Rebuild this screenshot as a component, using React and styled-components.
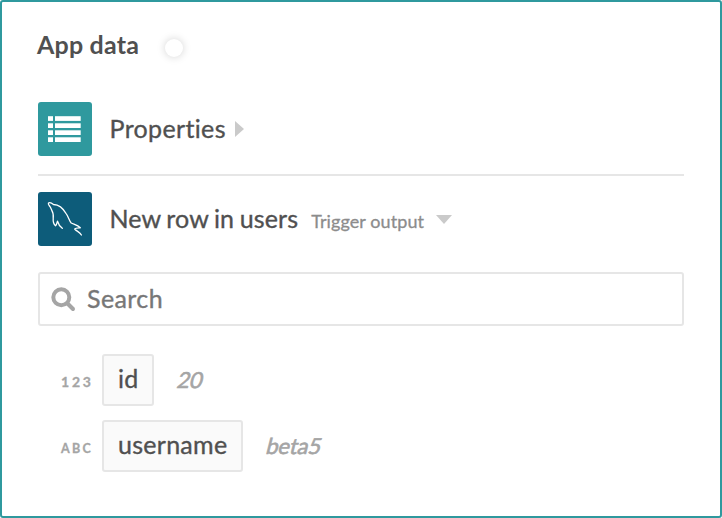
import React from "react";
import styled, { createGlobalStyle } from "styled-components";

const GlobalStyle = createGlobalStyle`
  * { box-sizing: border-box; }
  body { margin: 0; background: #fff; font-family: Lato, sans-serif; color: #505050; font-variant-ligatures: none; }
`;

const Panel = styled.main`
  display: flex;
  flex-direction: column;
  width: 722px;
  height: 518px;
  padding: 0 36px;
  border: 2px solid #2f999e;
  border-radius: 3px;
  background: #fff;
`;

const Header = styled.header`
  display: flex;
  align-items: center;
  height: 100px;
  padding-bottom: 14px;
`;

const Title = styled.h1`
  width: 127px;
  margin: -2px 0 0 -1px;
  font-size: 25px;
  line-height: 32px;
  font-weight: 700;
  letter-spacing: 0.2px;
`;

const Knob = styled.span`
  width: 18px;
  height: 18px;
  margin: 5px 0 0 1px;
  border-radius: 50%;
  background: #fff;
  box-shadow: 0 0 8px rgba(0, 0, 0, 0.18);
`;

const Source = styled.section`
  display: flex;
  align-items: center;
  height: ${(p) => p.$height}px;
  padding: ${(p) => p.$top || 0}px 0 18px;
  border-bottom: ${(p) => (p.$divided ? "2px solid #e6e6e6" : "0")};
`;

const Tile = styled.div`
  width: 54px;
  height: 54px;
  margin-right: 17.5px;
  border-radius: 3px;
  background: ${(p) => p.$color};
  svg { display: block; }
`;

const SourceName = styled.h2`
  margin: -2px 0 0;
  font-size: 25px;
  line-height: 32px;
  font-weight: 400;
  -webkit-text-stroke: 0.35px currentColor;
  letter-spacing: ${(p) => p.$spacing}px;
  word-spacing: -1px;
`;

const Note = styled.span`
  margin: 3px 0 0 13px;
  color: #8c8c8c;
  font-size: 18px;
  line-height: 24px;
  -webkit-text-stroke: 0.3px currentColor;
  letter-spacing: 0.1px;
`;

const Arrow = styled.svg`
  display: block;
  margin-left: ${(p) => p.$gap}px;
  fill: #cacaca;
`;

const SearchBox = styled.label`
  display: flex;
  align-items: center;
  height: 54px;
  margin-top: 8px;
  padding-left: 11px;
  border: 2px solid #e6e6e6;
  border-radius: 3px;
`;

const SearchInput = styled.input`
  flex: 1;
  height: 44px;
  margin: -3px 0 0 11px;
  padding: 0;
  border: 0;
  outline: 0;
  background: transparent;
  font: 400 25px Lato, sans-serif;
  letter-spacing: 0.4px;
  &::placeholder { color: #777; opacity: 1; -webkit-text-stroke: 0.35px #777; }
`;

const Fields = styled.ul`
  display: grid;
  gap: 14px;
  margin: 28px 0 0;
  padding: 0;
  list-style: none;
`;

const Field = styled.li`
  display: flex;
  align-items: center;
  height: 52px;
`;

const Type = styled.span`
  width: 64px;
  padding: ${(p) => p.$top}px 0 0 23px;
  color: #a5a5a5;
  font-size: ${(p) => p.$size}px;
  font-weight: 700;
  letter-spacing: ${(p) => p.$spacing}px;
  white-space: nowrap;
  -webkit-text-stroke: 0.3px currentColor;
`;

const Pill = styled.span`
  height: 52px;
  padding: 0 13.8px 0 14px;
  border: 2px solid #e6e6e6;
  border-radius: 3px;
  background: #fafafa;
  font-size: 25px;
  line-height: 45px;
  letter-spacing: 0.27px;
  -webkit-text-stroke: 0.35px currentColor;
`;

const Sample = styled.em`
  color: #a5a5a5;
  margin: -2px 0 0 23.5px;
  font-size: 22px;
  font-style: normal;
  letter-spacing: -0.15px;
  transform: skewX(-14deg);
  -webkit-text-stroke: 0.6px currentColor;
`;

const ListIcon = () => (
  <svg width="54" height="54" viewBox="0 0 54 54" fill="#fff">
    {[14.2, 21.3, 28.3, 35.3].map((y) => (
      <React.Fragment key={y}>
        <rect x="10" y={y} width="5" height="4.7" />
        <rect x="17" y={y} width="25.7" height="4.7" />
      </React.Fragment>
    ))}
  </svg>
);

const DolphinIcon = () => (
  <svg width="54" height="54" viewBox="0 0 54 54" fill="none" stroke="#fff" strokeWidth="1.3" strokeLinejoin="round" strokeLinecap="round">
    <path d="M24.3 36.3C22 34.5 20.3 32 19.5 29.2C18.8 31 18.5 33 17.6 33.8C15.8 32.5 15 29 15.2 26.3C16.2 21 13.5 18 12.4 15.3C11.4 13.5 9.6 12.2 10.5 11C11.7 10.1 14 11.2 15.5 12.5C22 12.6 26.4 18.5 28.4 22C30.4 25 31.4 29 33.2 31C36 32.4 39.6 32.7 42.3 35.8C40 36 37.8 35.9 36.7 37C38.5 39.4 41.7 39.8 43.4 43" />
  </svg>
);

const SearchIcon = () => (
  <svg width="25" height="25" viewBox="0 0 25 25" fill="none" stroke="#a5a5a5" strokeLinecap="round">
    <circle cx="10.3" cy="10.3" r="8" strokeWidth="4" />
    <path d="M16.5 16.5L22 22" strokeWidth="4" />
  </svg>
);

const fields = [
  { type: "123", size: 14, spacing: 2.8, top: 2, name: "id", sample: "20" },
  { type: "ABC", size: 12.5, spacing: 2.3, top: 4, name: "username", sample: "beta5" },
];

export default function App() {
  return (
    <>
      <GlobalStyle />
      <Panel>
        <Header>
          <Title>App data</Title>
          <Knob />
        </Header>
        <Source $height={74} $divided>
          <Tile $color="#2f999e"><ListIcon /></Tile>
          <SourceName $spacing={0.35}>Properties</SourceName>
          <Arrow $gap={9} width="9" height="16"><path d="M0 0L9 8L0 16Z" /></Arrow>
        </Source>
        <Source $height={88} $top={16}>
          <Tile $color="#0d5c7a"><DolphinIcon /></Tile>
          <SourceName $spacing={0.13}>New row in users</SourceName>
          <Note>Trigger output</Note>
          <Arrow $gap={12} width="16" height="9"><path d="M0 0H16L8 9Z" /></Arrow>
        </Source>
        <SearchBox>
          <SearchIcon />
          <SearchInput placeholder="Search" aria-label="Search" />
        </SearchBox>
        <Fields>
          {fields.map((f) => (
            <Field key={f.name}>
              <Type $size={f.size} $spacing={f.spacing} $top={f.top}>{f.type}</Type>
              <Pill>{f.name}</Pill>
              <Sample>{f.sample}</Sample>
            </Field>
          ))}
        </Fields>
      </Panel>
    </>
  );
}
